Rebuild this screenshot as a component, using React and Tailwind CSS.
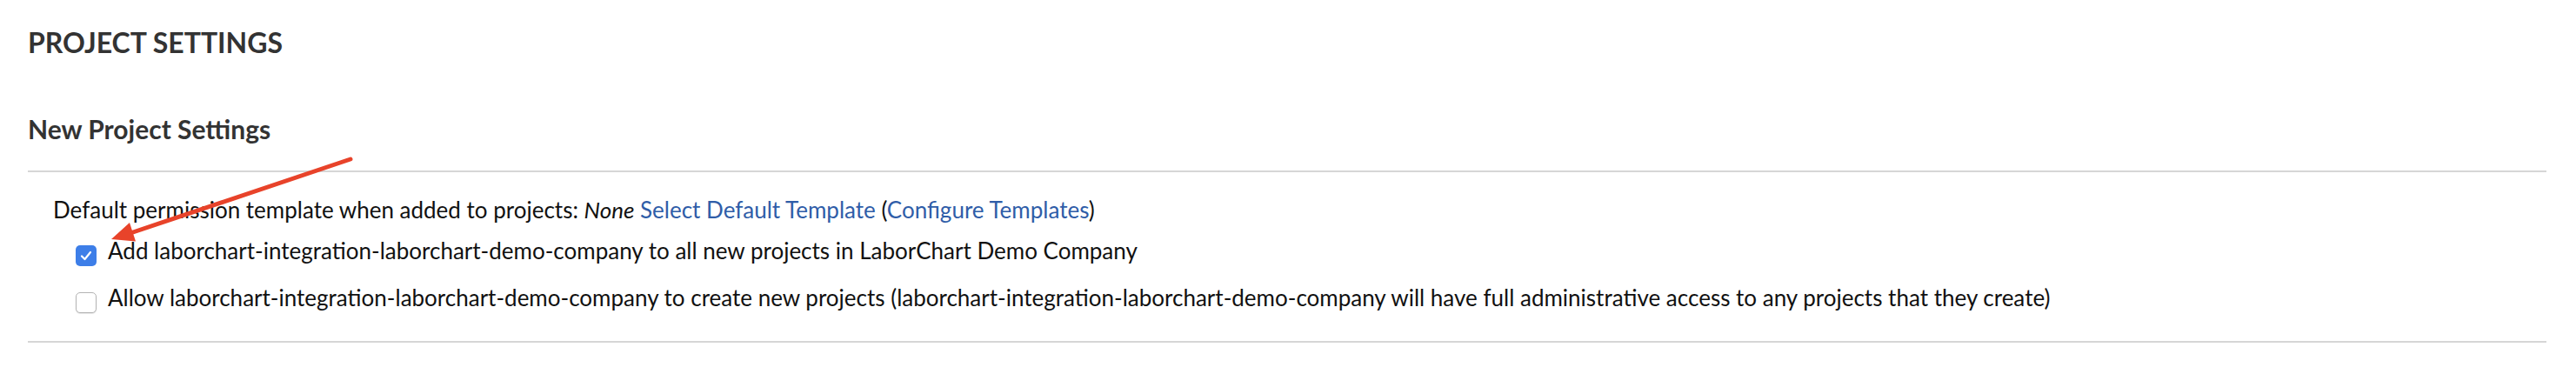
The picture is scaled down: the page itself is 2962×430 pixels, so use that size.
import React from "react";

function Checkbox({ checked }) {
  if (checked) {
    return (
      <span className="mt-[9px] flex h-[24px] w-[24px] shrink-0 items-center justify-center rounded-[5px] bg-[#3d7ee8]">
        <svg width="14" height="12" viewBox="0 0 14 12" fill="none">
          <path d="M2 6.5 L5.5 10 L12 2" stroke="#ffffff" strokeWidth="2.2" strokeLinecap="round" strokeLinejoin="round" />
        </svg>
      </span>
    );
  }
  return (
    <span className="mt-[9px] h-[24px] w-[24px] shrink-0 rounded-[5px] border-[1.5px] border-[#b3b3b3] bg-white shadow-[0_1px_1px_rgba(0,0,0,0.1)]" />
  );
}

export default function App() {
  return (
    <div className="relative h-[430px] w-[2962px] bg-white pl-[32px] pr-[34px] font-['Lato','Liberation_Sans',sans-serif]">
      <h1 className="pt-[30px] text-[32px] font-bold leading-[1.2] text-[#333333]">PROJECT SETTINGS</h1>
      <h2 className="mt-[62px] text-[30px] font-bold leading-[1.2] text-[#333333]">New Project Settings</h2>
      <div className="mt-[30px] border-t-2 border-[#d6d6d6]">
        <div className="pl-[29px] pt-[28px] pb-[32px] text-[26px] leading-[1.2] text-[#111111]">
          <p>
            Default permission template when added to projects: <em>None</em>{" "}
            <a className="text-[#2f5da8]">Select Default Template</a> (
            <a className="text-[#2f5da8]">Configure Templates</a>)
          </p>
          <label className="mt-[15px] flex items-start gap-[13px] pl-[26px]">
            <Checkbox checked />
            <span>Add laborchart-integration-laborchart-demo-company to all new projects in LaborChart Demo Company</span>
          </label>
          <label className="mt-[21px] flex items-start gap-[13px] pl-[26px]">
            <Checkbox checked={false} />
            <span>
              Allow laborchart-integration-laborchart-demo-company to create new projects (laborchart-integration-laborchart-demo-company will have full administrative access to any projects that they create)
            </span>
          </label>
        </div>
      </div>
      <div className="border-t-2 border-[#d6d6d6]" />
      <svg className="pointer-events-none absolute left-0 top-0" width="2962" height="430">
        <line x1="403" y1="183" x2="150" y2="268" stroke="#e8432a" strokeWidth="5" strokeLinecap="round" />
        <polygon points="128,275 156,277.5 149,256" fill="#e8432a" />
      </svg>
    </div>
  );
}
